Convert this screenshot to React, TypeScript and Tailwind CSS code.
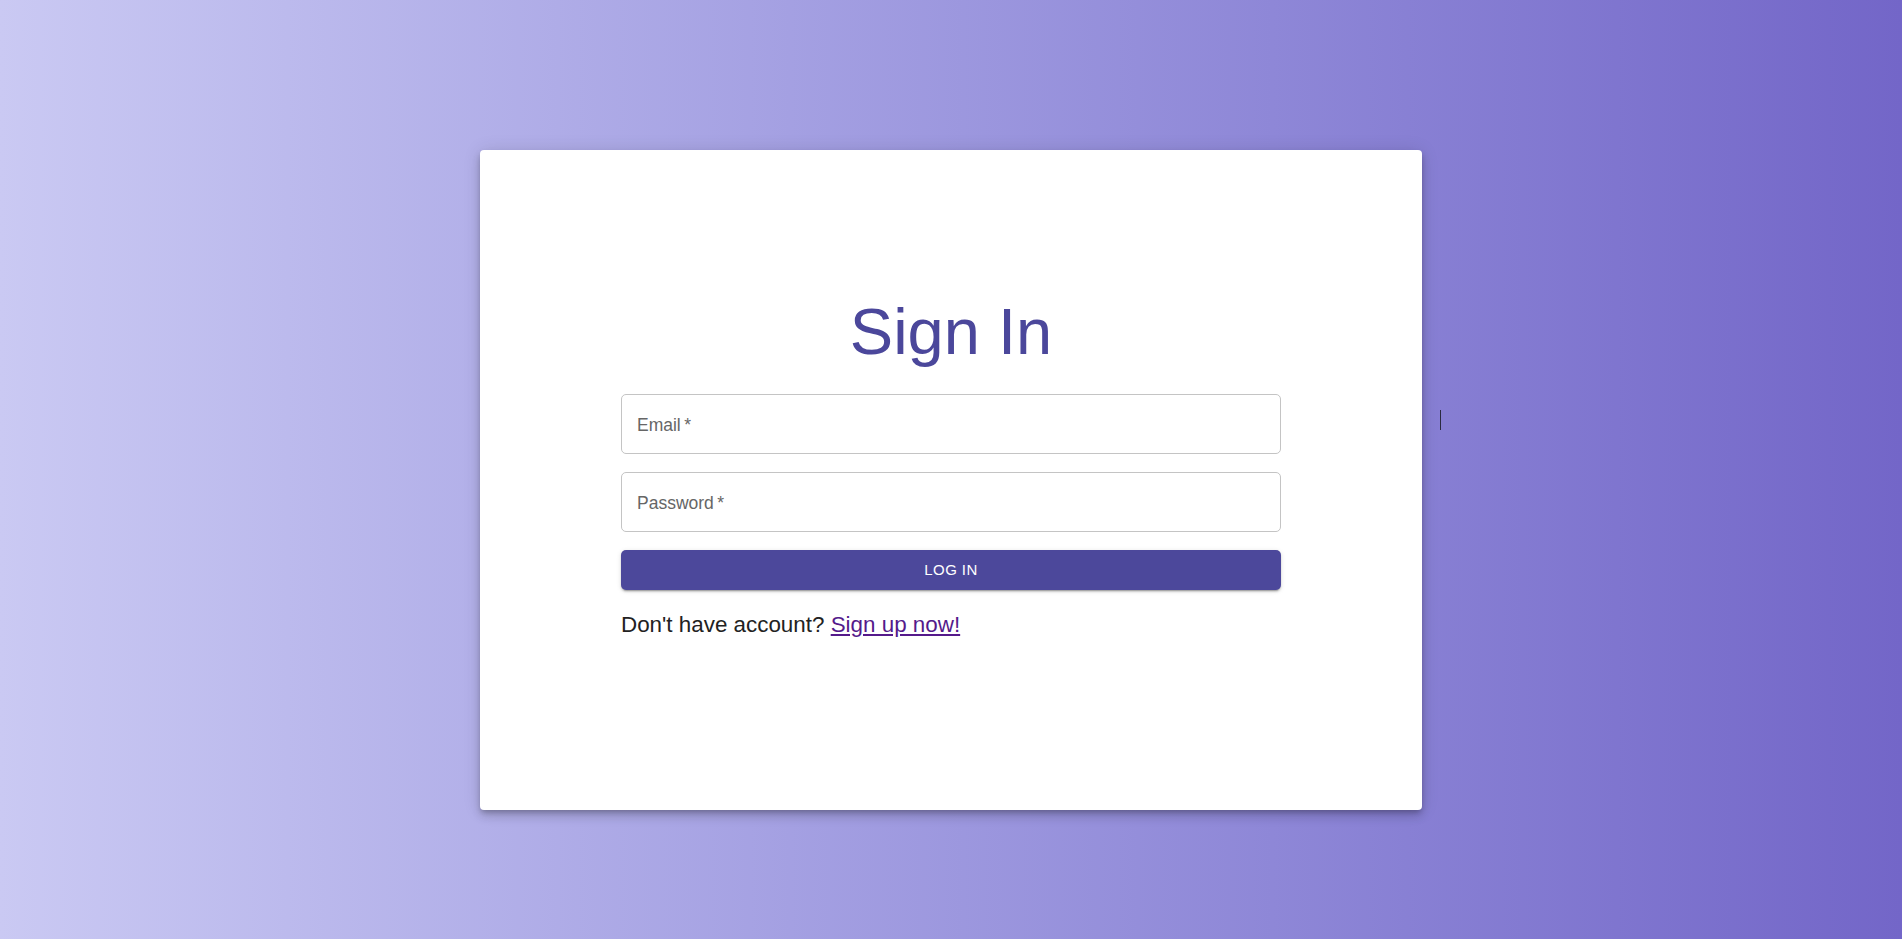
import { useState } from "react";

function Field({ label, type }: { label: string; type: string }) {
  const [value, setValue] = useState("");
  return (
    <label className="relative flex h-[60px] w-full items-center rounded-[5px] border border-[#c4c4c4] bg-white px-[15px]">
      {value === "" && (
        <span className="pointer-events-none absolute left-[15px] top-[22px] text-[17.5px] leading-none text-[#666]">
          {label}
          {"\u2009*"}
        </span>
      )}
      <input
        type={type}
        value={value}
        onChange={(e) => setValue(e.target.value)}
        className="h-full w-full bg-transparent text-[17px] text-[#222] outline-none"
      />
    </label>
  );
}

export default function App() {
  return (
    <div
      className="relative h-[939px] w-full overflow-hidden bg-gradient-to-r from-[#cac9f3] to-[#7366c8] pt-[150px]"
      style={{ fontFamily: '"Liberation Sans", Arial, sans-serif' }}
    >
      <div className="mx-auto flex h-[660px] w-[942px] flex-col items-center rounded-[4px] bg-white pt-[149px] shadow-[0_3px_5px_-1px_rgba(0,0,0,0.2),0_6px_10px_0_rgba(0,0,0,0.14),0_1px_18px_0_rgba(0,0,0,0.12)]">
        <h1 className="text-[65px] leading-none font-normal text-[#4b479b]">Sign In</h1>

        <form className="mt-[30px] flex w-[660px] flex-col" onSubmit={(e) => e.preventDefault()}>
          <Field label="Email" type="email" />
          <div className="mt-[18px]">
            <Field label="Password" type="password" />
          </div>
          <button
            type="submit"
            className="mt-[18px] h-[40px] w-full rounded-[5px] bg-[#4c489b] text-[15px] font-medium tracking-[0.43px] text-white shadow-[0_3px_1px_-2px_rgba(0,0,0,0.2),0_2px_2px_0_rgba(0,0,0,0.14),0_1px_5px_0_rgba(0,0,0,0.12)]"
          >
            LOG IN
          </button>
          <p className="mt-[24px] text-[22.4px] leading-none text-[#222]">
            Don't have account?{" "}
            <a href="#" className="text-[#551a8b] underline">
              Sign up now!
            </a>
          </p>
        </form>
      </div>

      <span className="absolute left-[1440px] top-[410px] h-[20px] w-px bg-[#2a2a40]" />
    </div>
  );
}
